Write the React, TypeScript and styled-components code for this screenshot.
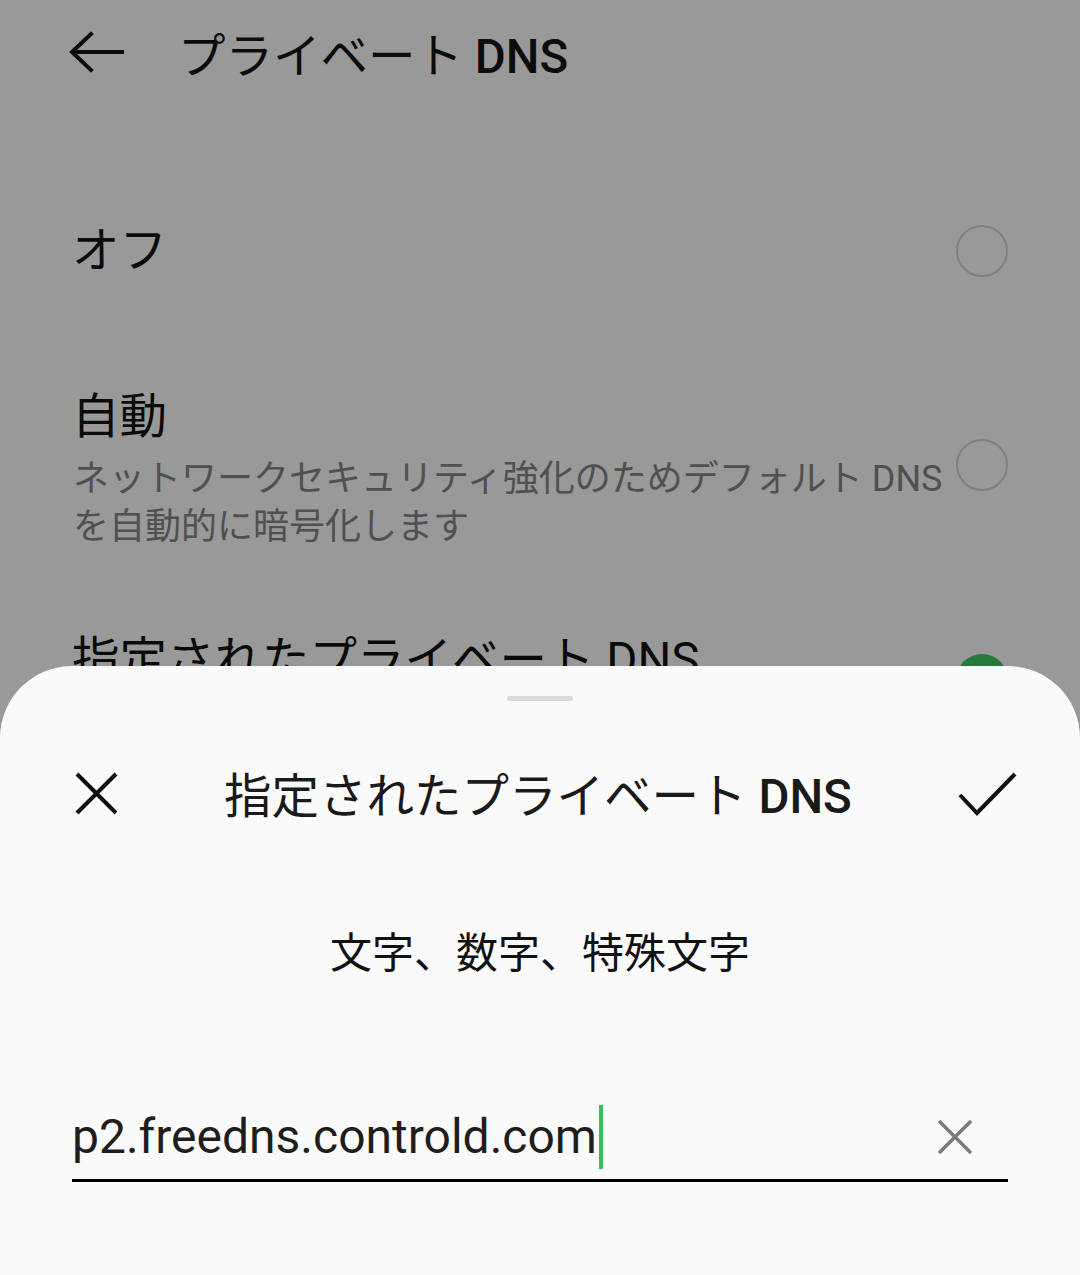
import React from "react";
import styled, { createGlobalStyle } from "styled-components";

const Global = createGlobalStyle`
  html, body { margin: 0; padding: 0; }
  body { font-family: Roboto, "Noto Sans CJK JP", sans-serif; }
`;

const Screen = styled.div`
  position: relative;
  width: 1080px;
  height: 1275px;
  overflow: hidden;
  background: #999999;
`;

const Header = styled.div`
  display: flex;
  align-items: center;
  height: 104px;
  padding-left: 68px;
  gap: 54px;
`;

const HeaderTitle = styled.div`
  font-size: 47.5px;
  font-weight: 400;
  color: #0c0c0c;
`;

const Latin = styled.span`
  font-weight: 500;
`;

const List = styled.div`
  display: flex;
  flex-direction: column;
  padding: 0 72px 0 72px;
  margin-top: 92px;
`;

const Row = styled.div<{ $h: number; $top: number }>`
  display: flex;
  align-items: center;
  justify-content: space-between;
  min-height: ${(p) => p.$h}px;
  margin-top: ${(p) => p.$top}px;
`;

const RowText = styled.div`
  display: flex;
  flex-direction: column;
`;

const RowTitle = styled.div`
  font-size: 47.5px;
  color: #0a0a0a;
  line-height: 60px;
`;

const RowSub = styled.div`
  font-size: 36px;
  color: #505050;
  line-height: 48px;
  width: 880px;
  margin-top: 8px;
  padding-left: 1px;
`;

const Radio = styled.div<{ $on?: boolean; $shift?: number }>`
  width: 52px;
  height: 52px;
  box-sizing: border-box;
  border-radius: 50%;
  flex-shrink: 0;
  margin-top: ${(p) => p.$shift ?? 0}px;
  border: ${(p) => (p.$on ? "none" : "2.5px solid #808080")};
  background: ${(p) => (p.$on ? "#237a3a" : "transparent")};
`;

const Sheet = styled.div`
  position: absolute;
  left: 0;
  right: 0;
  top: 666px;
  bottom: 0;
  background: #fafafa;
  border-radius: 72px 72px 0 0;
  display: flex;
  flex-direction: column;
  align-items: center;
`;

const Handle = styled.div`
  width: 66px;
  height: 5px;
  border-radius: 3px;
  background: #d9d9d9;
  margin-top: 30px;
`;

const SheetBar = styled.div`
  align-self: stretch;
  display: flex;
  align-items: center;
  justify-content: space-between;
  padding: 0 62px 0 74px;
  margin-top: 63px;
  height: 60px;
`;

const SheetTitle = styled.div`
  font-size: 47.5px;
  font-weight: 400;
  color: #1a1a1a;
  margin-top: -4px;
`;

const Hint = styled.div`
  font-size: 42px;
  color: #111;
  margin-top: 102px;
  line-height: 56px;
`;

const Field = styled.div`
  align-self: stretch;
  margin: 112px 72px 0 72px;
  display: flex;
  align-items: center;
  height: 85px;
  border-bottom: 3px solid #000;
`;

const FieldText = styled.div`
  font-size: 48px;
  color: #1e1e1e;
  display: flex;
  align-items: center;
  flex: 1;
`;

const Caret = styled.span`
  display: inline-block;
  width: 4px;
  height: 64px;
  background: #3dbb54;
  margin-left: 2px;
`;

const ClearBtn = styled.div`
  width: 34px;
  height: 34px;
  margin-right: 36px;
  display: flex;
`;

const Icon = styled.svg`
  display: block;
`;

export default function App() {
  return (
    <>
      <Global />
      <Screen>
        <Header>
          <Icon width="56" height="44" viewBox="0 0 56 44">
            <path d="M54 22 H5 M23 4 L4 22 L23 40" fill="none" stroke="#0c0c0c" strokeWidth="4" strokeLinecap="square" />
          </Icon>
          <HeaderTitle>
            プライベート <Latin>DNS</Latin>
          </HeaderTitle>
        </Header>
        <List>
          <Row $h={110} $top={0}>
            <RowTitle>オフ</RowTitle>
            <Radio />
          </Row>
          <Row $h={230} $top={48}>
            <RowText>
              <RowTitle>自動</RowTitle>
              <RowSub>ネットワークセキュリティ強化のためデフォルト DNS を自動的に暗号化します</RowSub>
            </RowText>
            <Radio $shift={-8} />
          </Row>
          <Row $h={100} $top={26}>
            <RowTitle>指定されたプライベート DNS</RowTitle>
            <Radio $on $shift={40} />
          </Row>
        </List>
        <Sheet>
          <Handle />
          <SheetBar>
            <Icon width="44" height="44" viewBox="0 0 44 44">
              <path d="M3 2 L42 41 M42 2 L3 41" stroke="#111" strokeWidth="4" fill="none" />
            </Icon>
            <SheetTitle>
              指定されたプライベート <Latin>DNS</Latin>
            </SheetTitle>
            <Icon width="60" height="46" viewBox="0 0 60 46">
              <path d="M2 24 L19 42 L57 3" stroke="#111" strokeWidth="4" fill="none" />
            </Icon>
          </SheetBar>
          <Hint>文字、数字、特殊文字</Hint>
          <Field>
            <FieldText>
              p2.freedns.controld.com
              <Caret />
            </FieldText>
            <ClearBtn>
              <Icon width="34" height="34" viewBox="0 0 34 34">
                <path d="M1 1 L33 33 M33 1 L1 33" stroke="#7a7a7a" strokeWidth="3.5" fill="none" />
              </Icon>
            </ClearBtn>
          </Field>
        </Sheet>
      </Screen>
    </>
  );
}
